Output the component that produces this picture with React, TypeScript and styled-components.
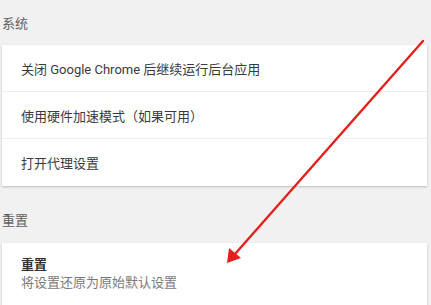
import React from 'react';
import styled, { createGlobalStyle } from 'styled-components';

const GlobalStyle = createGlobalStyle`
  html, body {
    margin: 0;
    padding: 0;
    background: #f1f1f1;
    font-family: Roboto, "Noto Sans CJK SC", sans-serif;
    overflow: hidden;
  }
`;

interface IRow {
  label: string;
}

const systemRows: IRow[] = [
  { label: '关闭 Google Chrome 后继续运行后台应用' },
  { label: '使用硬件加速模式（如果可用）' },
  { label: '打开代理设置' },
];

//page with two settings sections and an arrow drawn over them
const App: React.FC = () => {
  return (
    <React.Fragment>
      <GlobalStyle />
      <Page>
        <SectionTitle top={16} height={45}>
          系统
        </SectionTitle>
        <Card>
          {systemRows.map((row, i) => (
            <Row key={row.label} isLast={i === systemRows.length - 1}>
              {row.label}
            </Row>
          ))}
        </Card>
        <SectionTitle top={27} height={57}>
          重置
        </SectionTitle>
        <Card>
          <ResetItem>
            <ResetTitle>重置</ResetTitle>
            <ResetDesc>将设置还原为原始默认设置</ResetDesc>
          </ResetItem>
        </Card>
        <Arrow viewBox='0 0 431 305' width='431' height='305'>
          <line
            x1='423'
            y1='41'
            x2='235'
            y2='254'
            stroke='#e3201b'
            strokeWidth='2.4'
            strokeLinecap='round'
          />
          <polygon points='227,263 229,248 241,258' fill='#e3201b' />
        </Arrow>
      </Page>
    </React.Fragment>
  );
};

export default App;

const Page = styled.div`
  position: relative;
  width: 431px;
  height: 305px;
  padding-left: 2px;
  box-sizing: border-box;
`;

const SectionTitle = styled.div<{ top: number; height: number }>`
  padding-top: ${(props) => props.top}px;
  height: ${(props) => props.height}px;
  box-sizing: border-box;
  font-size: 13px;
  line-height: 16px;
  color: #606060;
`;

const Card = styled.div`
  width: 425px;
  background: #ffffff;
  box-shadow: 0 1px 2px rgba(0, 0, 0, 0.22);
`;

const Row = styled.div<{ isLast: boolean }>`
  height: 47px;
  display: flex;
  align-items: center;
  padding-left: 19px;
  font-size: 13px;
  color: #3a3a3a;
  border-bottom: ${(props) => (props.isLast ? 'none' : '1px solid #efefef')};
  box-sizing: border-box;
`;

const ResetItem = styled.div`
  padding: 14px 19px 10px;
  display: flex;
  flex-direction: column;
  gap: 2px;
  height: 70px;
  box-sizing: border-box;
`;

const ResetTitle = styled.div`
  font-size: 13px;
  line-height: 16px;
  font-weight: 700;
  color: #333333;
`;

const ResetDesc = styled.div`
  font-size: 13px;
  line-height: 16px;
  color: #7a7a7a;
`;

const Arrow = styled.svg`
  position: absolute;
  left: 0;
  top: 0;
  pointer-events: none;
`;
